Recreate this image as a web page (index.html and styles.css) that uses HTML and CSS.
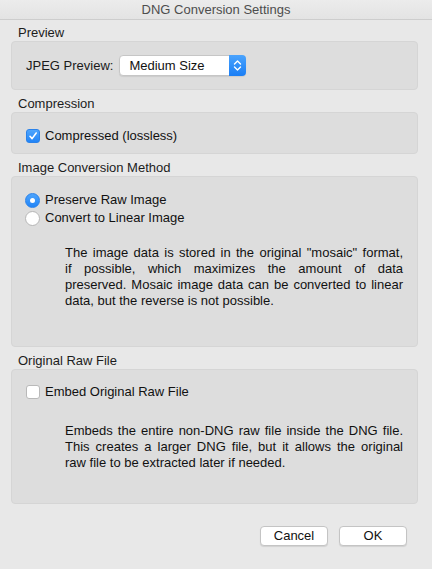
FILE: index.html
```html
<!DOCTYPE html>
<html>
<head>
<meta charset="utf-8">
<title>DNG Conversion Settings</title>
<link rel="stylesheet" href="styles.css">
</head>
<body>
<div class="window">
  <div class="titlebar">DNG Conversion Settings</div>
  <div class="main">
    <div class="group-label first">Preview</div>
    <div class="group group-preview">
      <span class="field-label">JPEG Preview:</span>
      <div class="popup">
        <span class="popup-text">Medium Size</span>
        <span class="popup-arrows">
          <svg width="9" height="13" viewBox="0 0 9 13"><path d="M1.5 5 L4.5 2 L7.5 5 M1.5 8 L4.5 11 L7.5 8" fill="none" stroke="#fff" stroke-width="1.4" stroke-linecap="round" stroke-linejoin="round"/></svg>
        </span>
      </div>
    </div>

    <div class="group-label">Compression</div>
    <div class="group group-compression">
      <div class="option">
        <span class="checkbox checked">
          <svg width="10" height="10" viewBox="0 0 10 10"><path d="M2 5.3 L4.1 7.6 L8.2 2" fill="none" stroke="#fff" stroke-width="1.6" stroke-linecap="round" stroke-linejoin="round"/></svg>
        </span>
        <span>Compressed (lossless)</span>
      </div>
    </div>

    <div class="group-label">Image Conversion Method</div>
    <div class="group group-method">
      <div class="option">
        <span class="radio selected"><span class="dot"></span></span>
        <span>Preserve Raw Image</span>
      </div>
      <div class="option">
        <span class="radio"></span>
        <span>Convert to Linear Image</span>
      </div>
      <div class="desc desc-method">
        <span class="line">The image data is stored in the original "mosaic" format,</span>
        <span class="line">if possible, which maximizes the amount of data</span>
        <span class="line">preserved. Mosaic image data can be converted to linear</span>
        <span class="line last">data, but the reverse is not possible.</span>
      </div>
    </div>

    <div class="group-label">Original Raw File</div>
    <div class="group group-raw">
      <div class="option">
        <span class="checkbox"></span>
        <span>Embed Original Raw File</span>
      </div>
      <div class="desc desc-raw">
        <span class="line">Embeds the entire non-DNG raw file inside the DNG file.</span>
        <span class="line">This creates a larger DNG file, but it allows the original</span>
        <span class="line last">raw file to be extracted later if needed.</span>
      </div>
    </div>

    <div class="buttons">
      <button class="btn">Cancel</button>
      <button class="btn">OK</button>
    </div>
  </div>
</div>
</body>
</html>
```

FILE: styles.css
```css
html, body {
  margin: 0;
  padding: 0;
}

body {
  font-family: "Liberation Sans", Arial, sans-serif;
  font-size: 13px;
  color: #1e1e1e;
  background: #e8e8e8;
}

.window {
  width: 432px;
  height: 569px;
  background: #e8e8e8;
  overflow: hidden;
}

.titlebar {
  height: 19px;
  line-height: 19px;
  text-align: center;
  color: #4d4d4d;
  background: linear-gradient(#ececec, #e3e3e3);
  border-bottom: 1px solid #cdcdcd;
}

.main {
  padding: 0 14px 0 11px;
}

.group-label {
  padding: 6px 0 0 7px;
  line-height: 16px;
  color: #1c1c1c;
}

.group-label.first {
  padding-top: 5px;
}

.group {
  box-sizing: border-box;
  background: #dddddd;
  border: 1px solid #d5d5d5;
  border-radius: 4px;
}

.group-preview {
  height: 49px;
  display: flex;
  align-items: center;
  padding-left: 14px;
  gap: 6px;
}

.field-label {
  color: #1a1a1a;
}

.popup {
  box-sizing: border-box;
  width: 127px;
  height: 21px;
  display: flex;
  align-items: stretch;
  background: #fff;
  border: 1px solid #c6c6c6;
  border-radius: 4px;
  box-shadow: 0 1px 1px rgba(0, 0, 0, 0.08);
}

.popup-text {
  flex: 1;
  line-height: 19px;
  padding-left: 9px;
  color: #111;
}

.popup-arrows {
  width: 17px;
  margin: -1px -1px -1px 0;
  display: flex;
  align-items: center;
  justify-content: center;
  background: linear-gradient(#4aa3fd, #1a7ef5);
  border-radius: 0 4px 4px 0;
}

.group-compression {
  height: 42px;
  padding: 14px 0 0 14px;
}

.option {
  display: flex;
  align-items: center;
  gap: 5px;
  height: 18px;
  line-height: 18px;
  color: #111;
}

.checkbox {
  box-sizing: border-box;
  width: 14px;
  height: 14px;
  border-radius: 3px;
  background: #fff;
  border: 1px solid #b9b9b9;
  display: flex;
  align-items: center;
  justify-content: center;
}

.checkbox.checked {
  background: linear-gradient(#4ea5fd, #2184f7);
  border-color: #2a82ea;
}

.radio {
  box-sizing: border-box;
  width: 15px;
  height: 15px;
  border-radius: 50%;
  background: #fff;
  border: 1px solid #b6b6b6;
  display: flex;
  align-items: center;
  justify-content: center;
}

.radio.selected {
  background: linear-gradient(#4ea5fd, #2184f7);
  border-color: #2a82ea;
}

.dot {
  width: 5px;
  height: 5px;
  border-radius: 50%;
  background: #fff;
}

.group-method {
  height: 171px;
  padding: 14px 14px 0 12px;
}

.group-raw {
  height: 135px;
  padding: 13px 14px 0 14px;
}

.group-method .option {
  margin-left: 1px;
}

.desc {
  line-height: 16px;
  color: #111;
  margin-left: 41px;
}

.desc-method {
  margin-top: 18px;
}

.desc-raw {
  margin-top: 22px;
  margin-left: 39px;
}

.line {
  display: block;
  text-align: justify;
  text-align-last: justify;
  white-space: nowrap;
}

.line.last {
  text-align-last: left;
}

.buttons {
  display: flex;
  justify-content: flex-end;
  gap: 11px;
  margin-top: 22px;
  padding-right: 11px;
}

.btn {
  box-sizing: border-box;
  width: 68px;
  height: 20px;
  font-family: "Liberation Sans", Arial, sans-serif;
  font-size: 13px;
  color: #111;
  background: #fff;
  border: 1px solid #c4c4c4;
  border-radius: 4px;
  box-shadow: 0 1px 1px rgba(0, 0, 0, 0.1);
  padding: 0;
  line-height: 18px;
}
```
